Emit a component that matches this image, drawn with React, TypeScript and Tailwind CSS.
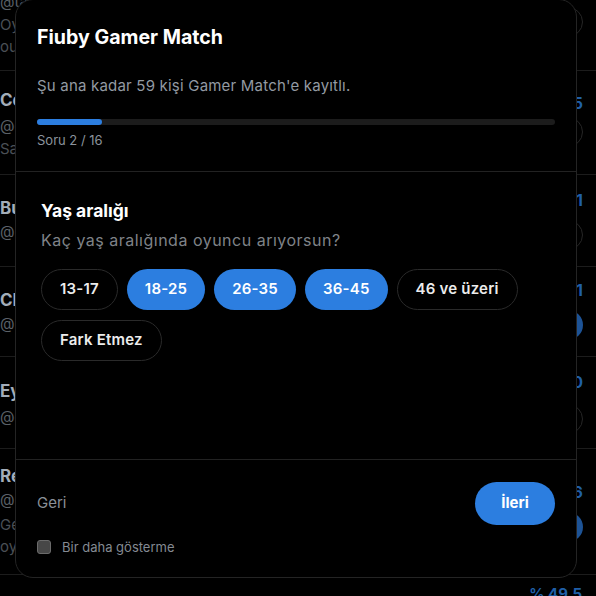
import { useState } from "react";

type Row = {
  h: string;
  leftPad: string;
  rightPad: string;
  name?: string;
  handle: string;
  bio: string[];
  count?: string;
  pillGap: string;
  filled: boolean;
};

const ROWS: Row[] = [
  { h: "h-[71px]", leftPad: "-mt-[11px]", rightPad: "pt-[7px]", handle: "@tayfun_gg", bio: ["Oyun gecelerinin vazgeçilmezi", "ourda ekip arıyorum"], pillGap: "mt-0", filled: false },
  { h: "h-[104px]", leftPad: "pt-[17px]", rightPad: "pt-[20px]", name: "Cem Aksoy", handle: "@cemaksoy", bio: ["Sayısal kafa, FPS oyuncusu"], count: "5", pillGap: "mt-[2px]", filled: false },
  { h: "h-[92px]", leftPad: "pt-[21px]", rightPad: "pt-[13px]", name: "Burak Kaya", handle: "@Kurtburak", bio: [], count: "1", pillGap: "mt-[8px]", filled: false },
  { h: "h-[90px]", leftPad: "pt-[21px]", rightPad: "pt-[11px]", name: "CRYPTIC", handle: "@Mertcan", bio: [], count: "1", pillGap: "mt-[8px]", filled: true },
  { h: "h-[92px]", leftPad: "pt-[22px]", rightPad: "pt-[13px]", name: "Eylül Demir", handle: "@eylul.dmr", bio: [], count: "0", pillGap: "mt-[10px]", filled: false },
  { h: "h-[126px]", leftPad: "pt-[15px]", rightPad: "pt-[31px]", name: "Recep Tan", handle: "@Recept", bio: ["Gece geç saatlere kadar", "oyun oynayan biri"], count: "6", pillGap: "mt-[8px]", filled: true },
];

function BackgroundRow({ row }: { row: Row }) {
  return (
    <div className={`flex ${row.h} shrink-0 justify-between overflow-hidden border-b border-[#1c1c1c] pr-[13px]`}>
      <div className={`flex flex-col ${row.leftPad} leading-[25px]`}>
        {row.name && <span className="text-[17px] font-bold text-[#a3adb9]">{row.name}</span>}
        <span className="text-[15px] text-[#5b6168]">{row.handle}</span>
        {row.bio.map((b) => (
          <span key={b} className="text-[15px] leading-[22px] text-[#4a4f55]">
            {b}
          </span>
        ))}
      </div>
      <div className={`flex flex-col items-end ${row.rightPad}`}>
        {row.count && <span className="text-[16px] font-bold leading-[24px] text-[#1f5fa8]">{row.count}</span>}
        <div
          className={`${row.pillGap} h-[30px] w-[84px] rounded-full ${
            row.filled ? "bg-[#1d5396]" : "border border-[#262626]"
          }`}
        />
      </div>
    </div>
  );
}

const AGES = ["13-17", "18-25", "26-35", "36-45", "46 ve üzeri", "Fark Etmez"];

export default function App() {
  const [selected, setSelected] = useState<string[]>(["18-25", "26-35", "36-45"]);
  const [hide, setHide] = useState(false);

  const toggle = (a: string) =>
    setSelected((s) => (s.includes(a) ? s.filter((x) => x !== a) : [...s, a]));

  return (
    <div className="relative h-[596px] w-[596px] overflow-hidden bg-black font-['Inter','Noto_Sans',sans-serif]">
      {/* page behind the dialog */}
      <div className="flex flex-col">
        {ROWS.map((r, i) => (
          <BackgroundRow key={i} row={r} />
        ))}
        <div className="flex justify-end pr-[14px] pt-[8px]">
          <span className="text-[15px] font-bold leading-[22px] text-[#1f5fa8]">% 49.5</span>
        </div>
      </div>

      {/* dialog */}
      <div className="absolute left-[15px] top-[-1px] flex h-[579px] w-[562px] flex-col rounded-[18px] border border-[#242424] bg-black">
        <div className="border-b border-[#222] px-[21px] pb-[22px] pt-[23px]">
          <h1 className="text-[19.6px] font-bold leading-[28px] text-white">Fiuby Gamer Match</h1>
          <p className="mt-[25px] text-[15px] leading-[20px] tracking-[0.2px] text-[#939aa3]">
            Şu ana kadar 59 kişi Gamer Match'e kayıtlı.
          </p>
          <div className="mt-[23px] h-[6px] w-full rounded-full bg-[#1c1c1c]">
            <div className="h-full w-[12.5%] rounded-full bg-[#2c7ee0]" />
          </div>
          <p className="mt-[6px] text-[13px] leading-[18px] text-[#8b939c]">Soru 2 / 16</p>
        </div>

        <div className="flex-1 px-[25px] pt-[27px]">
          <h2 className="text-[17.5px] font-bold leading-[24px] text-white">Yaş aralığı</h2>
          <p className="mt-[7px] text-[16px] leading-[20px] tracking-[0.5px] text-[#7f8388]">
            Kaç yaş aralığında oyuncu arıyorsun?
          </p>
          <div className="mt-[19px] flex flex-wrap gap-x-[9px] gap-y-[10px]">
            {AGES.map((a) => {
              const on = selected.includes(a);
              return (
                <button
                  key={a}
                  onClick={() => toggle(a)}
                  className={`h-[41px] rounded-full px-[18px] text-[15px] font-semibold tracking-[0.2px] ${
                    on ? "bg-[#2c7ee0] text-white" : "border border-[#2a2a2a] text-[#ececec]"
                  }`}
                >
                  {a}
                </button>
              );
            })}
          </div>
        </div>

        <div className="border-t border-[#222] px-[21px] pb-[20px] pt-[22px]">
          <div className="flex items-center justify-between">
            <button className="text-[15px] text-[#8a9098]">Geri</button>
            <button className="h-[43px] w-[80px] rounded-full bg-[#2c7ee0] text-[15px] font-bold text-white">İleri</button>
          </div>
          <label className="mt-[12px] flex items-center gap-[11px] leading-[20px]">
            <span
              onClick={() => setHide(!hide)}
              className={`h-[14px] w-[14px] rounded-[3px] border border-[#6b6b6b] ${hide ? "bg-[#2c7ee0]" : "bg-[#474747]"}`}
            />
            <span className="text-[13px] text-[#848a92]">Bir daha gösterme</span>
          </label>
        </div>
      </div>
    </div>
  );
}
